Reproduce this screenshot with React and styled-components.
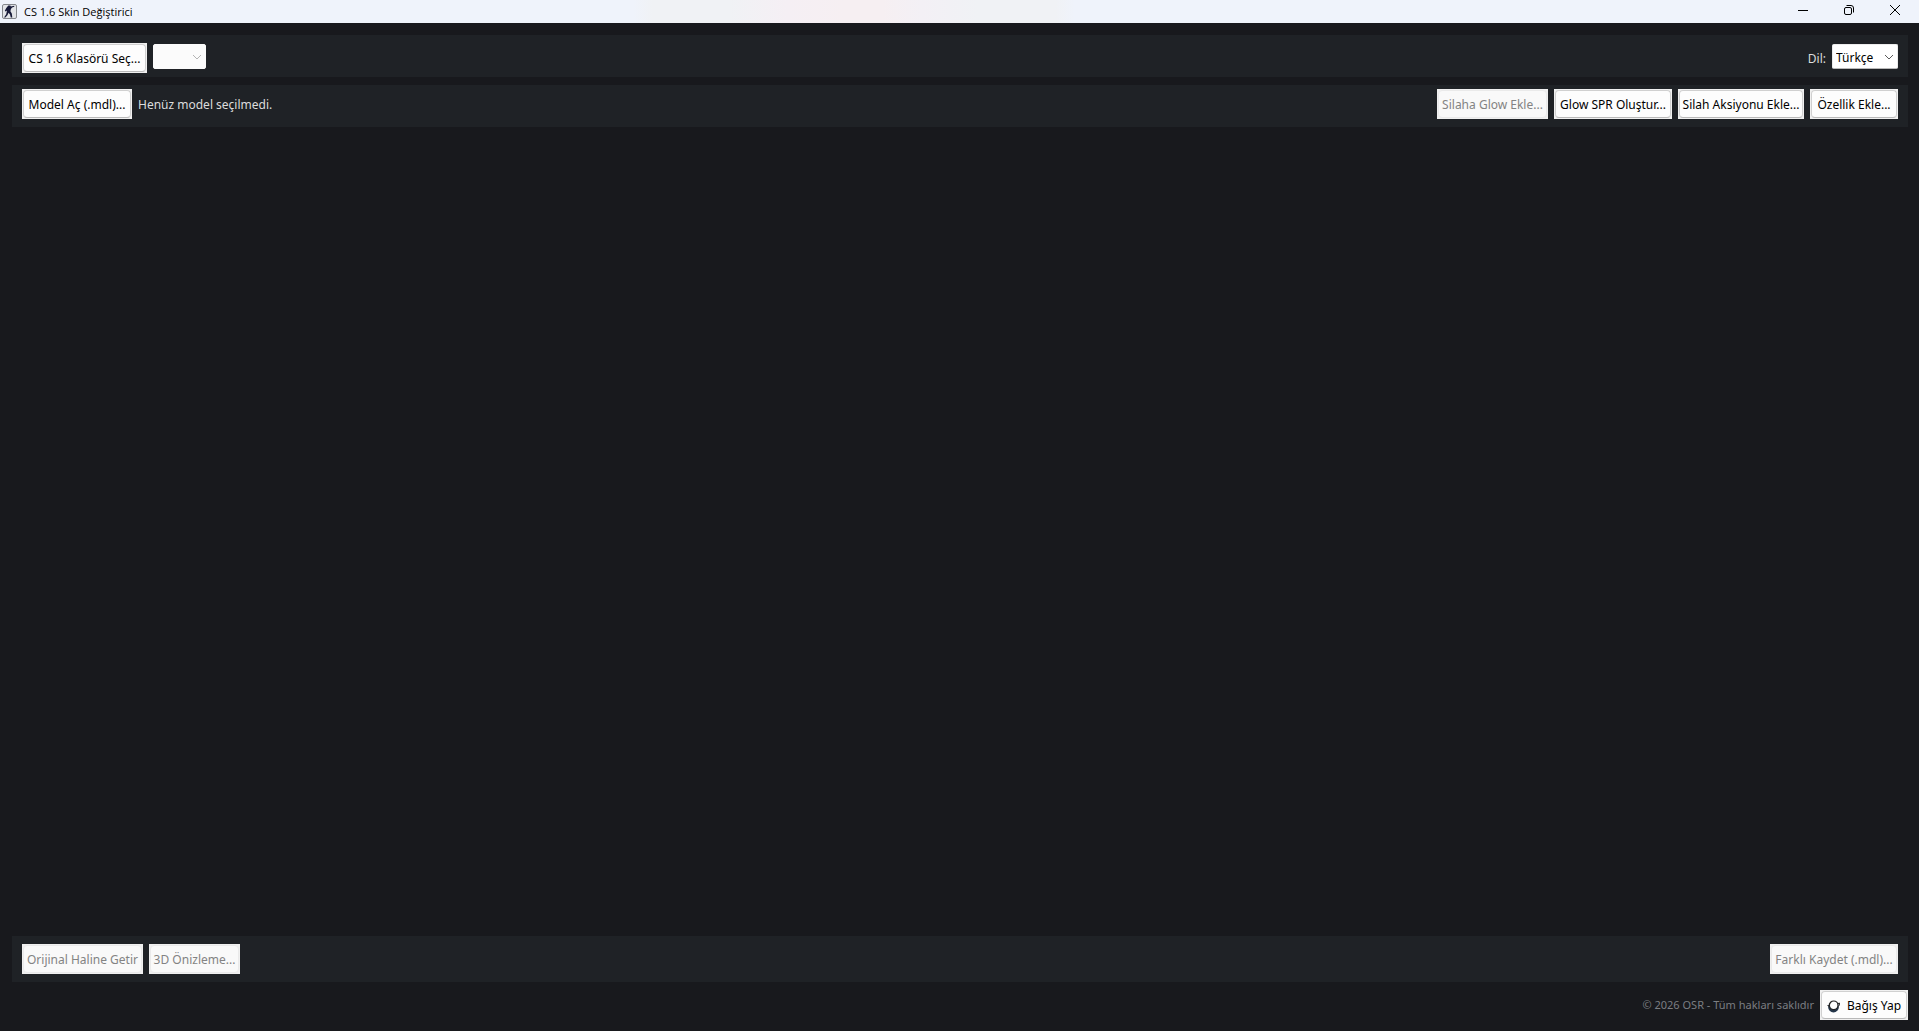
import React, { useState } from "react";
import styled, { createGlobalStyle } from "styled-components";

const GlobalStyle = createGlobalStyle`
  * {
    box-sizing: border-box;
  }

  body {
    margin: 0;
    background-color: #18191d;
  }

  body, button, select {
    font-family: "Noto Sans", "Open Sans", sans-serif;
    font-size: 12px;
    line-height: 16px;
  }
`;

const Window = styled.div`
  display: flex;
  flex-direction: column;
  min-height: 100vh;
`;

const TitleBar = styled.header`
  display: flex;
  align-items: center;
  height: 23px;
  padding: 0 1px 0 2px;
  background: linear-gradient(
    90deg,
    #eff3fb 33%,
    #f0f2f5 34%,
    #f0f2f5 38%,
    #f5eff4 41%,
    #f6eff2 44%,
    #f6eff2 46%,
    #f3f0f5 48%,
    #f0f2f5 51%,
    #f0f2f5 55%,
    #eff3fb 56%
  );
`;

const Title = styled.h1`
  flex: 1;
  margin: 0 0 0 7px;
  font-family: "Open Sans", "Noto Sans", sans-serif;
  font-size: 11px;
  font-weight: normal;
  color: #000000;
`;

const WindowButton = styled.button`
  display: flex;
  align-items: center;
  justify-content: center;
  width: 46px;
  height: 23px;
  padding: 0 0 3px;
  border: none;
  background: none;
  color: #000000;
`;

const Content = styled.main`
  display: flex;
  flex: 1;
  flex-direction: column;
  gap: 8px;
  padding: 12px 11px 11px 12px;
`;

const Toolbar = styled.section`
  display: flex;
  align-items: flex-start;
  gap: 6px;
  padding: ${({ $top }) => $top}px 10px ${({ $bottom }) => $bottom}px;
  background-color: #1f2226;
`;

const Workspace = styled.section`
  flex: 1;
`;

const Spacer = styled.div`
  flex: 1;
`;

const Footer = styled.footer`
  display: flex;
  align-items: center;
  justify-content: flex-end;
  gap: 6px;
`;

// light square frame around the rounded button face
const ToolButton = styled.button`
  width: ${({ $width }) => $width}px;
  height: 30px;
  padding: 1px;
  border: none;
  background-color: #f0f0f0;
  color: #000000;
  white-space: nowrap;

  &:disabled {
    color: #838383;
  }
`;

const Face = styled.span`
  display: flex;
  align-items: center;
  justify-content: center;
  gap: 7px;
  width: 100%;
  height: 28px;
  padding-top: 2px;
  border: 1px solid #d0d0d0;
  border-bottom-color: #b9b9b9;
  border-radius: 4px;
  background-color: #fdfdfd;

  ${ToolButton}:disabled & {
    border-color: #eaeaea;
    background-color: #f9f9f9;
  }
`;

const Status = styled.span`
  padding-top: 2px;
  line-height: 28px;
  color: #dcdcdc;
`;

const Label = styled.label`
  padding-top: 2px;
  line-height: 28px;
  color: #dcdcdc;
`;

const Copyright = styled.small`
  font-size: 11px;
  color: #7b7e82;
`;

const SelectBox = styled.div`
  display: grid;
  align-items: center;
  width: ${({ $width }) => $width}px;
  height: 25px;
  margin-top: 1px;

  > * {
    grid-area: 1 / 1;
  }

  > svg {
    justify-self: end;
    margin-right: 4px;
    pointer-events: none;
  }
`;

const Select = styled.select`
  appearance: none;
  width: 100%;
  height: 25px;
  padding: 2px 16px 0 3px;
  border: 1px solid #ececec;
  border-bottom-color: #b9b9b9;
  border-radius: 2px;
  background-color: #ffffff;
  color: #000000;

  &:disabled {
    border-color: #fbfbfb;
    background-color: #fbfbfb;
    opacity: 1;
  }
`;

const Chevron = ({ color }) => (
  <svg width="10" height="10" viewBox="0 0 10 10" fill="none" stroke={color}>
    <path d="M1 3l4 4 4-4" />
  </svg>
);

const AppIcon = () => (
  <svg width="15" height="15" viewBox="0 0 15 15">
    <rect x="0.5" y="0.5" width="14" height="14" rx="1.5" fill="#e2e4e7" stroke="#84878c" />
    <path
      d="M6.3 1.6h2l.6.8 3.3-.6.1.9-2.2.7L8.9 5l-.5 2.3 1.4 2.2.5 4H8.8L8 10.4 6.6 8.8l-1.2 2.4-2 2.3H2l2.2-3.3L5 6.6l-1.5.9-.7-.7L4.3 4z"
      fill="#171a38"
    />
  </svg>
);

const DonateIcon = () => (
  <svg width="13" height="13" viewBox="0 0 13 13">
    <circle cx="6.5" cy="7" r="5.4" fill="#25364a" />
    <circle cx="6.7" cy="5.3" r="4.3" fill="#ffffff" stroke="#202020" strokeWidth="1.2" />
    <path d="M.5 5.5l2 .5M10.8 3.6l1.7-.5-.3 2.6" fill="none" stroke="#202020" />
  </svg>
);

const ActionButton = ({ children, icon, width, ...props }) => (
  <ToolButton type="button" $width={width} {...props}>
    <Face>
      {icon}
      {children}
    </Face>
  </ToolButton>
);

const App = () => {
  const [language, setLanguage] = useState("tr");

  return (
    <Window>
      <GlobalStyle />
      <TitleBar>
        <AppIcon />
        <Title>CS 1.6 Skin Değiştirici</Title>
        <WindowButton type="button" aria-label="Simge durumuna küçült">
          <svg width="10" height="10" viewBox="0 0 10 10" stroke="currentColor">
            <path d="M0 5.5h10" />
          </svg>
        </WindowButton>
        <WindowButton type="button" aria-label="Önceki boyut">
          <svg width="10" height="10" viewBox="0 0 10 10" fill="none" stroke="currentColor">
            <rect x="0.5" y="2.5" width="7" height="7" rx="1.5" />
            <path d="M2.5.5H7A2.5 2.5 0 0 1 9.5 3v4.5" />
          </svg>
        </WindowButton>
        <WindowButton type="button" aria-label="Kapat">
          <svg width="10" height="10" viewBox="0 0 10 10" stroke="currentColor">
            <path d="M0 0l10 10M10 0L0 10" />
          </svg>
        </WindowButton>
      </TitleBar>

      <Content>
        <Toolbar $top={8} $bottom={4}>
          <ActionButton width={125}>CS 1.6 Klasörü Seç...</ActionButton>
          <SelectBox $width={53}>
            <Select disabled aria-label="Oyun klasörü" />
            <Chevron color="#b4b4b4" />
          </SelectBox>
          <Spacer />
          <Label htmlFor="language">Dil:</Label>
          <SelectBox $width={66}>
            <Select
              id="language"
              value={language}
              onChange={(event) => setLanguage(event.target.value)}
            >
              <option value="tr">Türkçe</option>
              <option value="en">English</option>
            </Select>
            <Chevron color="#5c5c5c" />
          </SelectBox>
        </Toolbar>

        <Toolbar $top={4} $bottom={8}>
          <ActionButton width={110}>Model Aç (.mdl)...</ActionButton>
          <Status>Henüz model seçilmedi.</Status>
          <Spacer />
          <ActionButton width={111} disabled>
            Silaha Glow Ekle...
          </ActionButton>
          <ActionButton width={118}>Glow SPR Oluştur...</ActionButton>
          <ActionButton width={126}>Silah Aksiyonu Ekle...</ActionButton>
          <ActionButton width={88}>Özellik Ekle...</ActionButton>
        </Toolbar>

        <Workspace />

        <Toolbar $top={8} $bottom={8}>
          <ActionButton width={121} disabled>
            Orijinal Haline Getir
          </ActionButton>
          <ActionButton width={91} disabled>
            3D Önizleme...
          </ActionButton>
          <Spacer />
          <ActionButton width={128} disabled>
            Farklı Kaydet (.mdl)...
          </ActionButton>
        </Toolbar>

        <Footer>
          <Copyright>© 2026 OSR - Tüm hakları saklıdır</Copyright>
          <ActionButton width={88} icon={<DonateIcon />}>
            Bağış Yap
          </ActionButton>
        </Footer>
      </Content>
    </Window>
  );
};

export default App;
